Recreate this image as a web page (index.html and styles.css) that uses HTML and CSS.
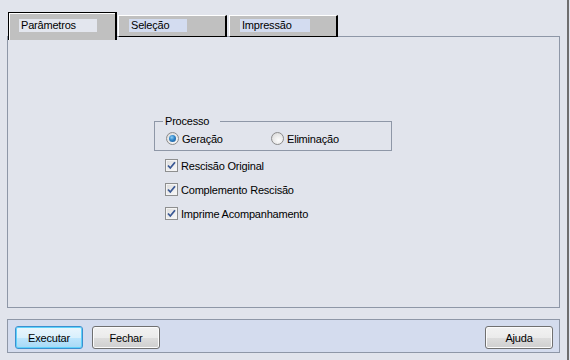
FILE: index.html
```html
<!DOCTYPE html>
<html lang="pt">
<head>
    <meta charset="UTF-8">
    <title>Parâmetros</title>
    <link rel="stylesheet" href="styles.css">
</head>
<body>
    <div class="window">
        <!-- Tabs -->
        <div class="tabs">
            <div class="tab active"><span class="tab-label label-params">Parâmetros</span></div>
            <div class="tab"><span class="tab-label label-selecao">Seleção</span></div>
            <div class="tab tab-last"><span class="tab-label label-impressao">Impressão</span></div>
        </div>

        <!-- Tab page -->
        <div class="panel">
            <fieldset class="group">
                <legend>Processo</legend>
                <div class="radios">
                    <label class="radio radio-first"><span class="radio-dot checked"></span>Geração</label>
                    <label class="radio"><span class="radio-dot"></span>Eliminação</label>
                </div>
            </fieldset>

            <div class="checks">
                <label class="check">
                    <span class="box"><svg width="11" height="11" viewBox="0 0 11 11"><path d="M2 5.5 L4.3 8 L9 2.3" fill="none" stroke="#3a5894" stroke-width="1.8"/></svg></span>
                    Rescisão Original
                </label>
                <label class="check">
                    <span class="box"><svg width="11" height="11" viewBox="0 0 11 11"><path d="M2 5.5 L4.3 8 L9 2.3" fill="none" stroke="#3a5894" stroke-width="1.8"/></svg></span>
                    Complemento Rescisão
                </label>
                <label class="check">
                    <span class="box"><svg width="11" height="11" viewBox="0 0 11 11"><path d="M2 5.5 L4.3 8 L9 2.3" fill="none" stroke="#3a5894" stroke-width="1.8"/></svg></span>
                    Imprime Acompanhamento
                </label>
            </div>
        </div>

        <!-- Button bar -->
        <div class="bar">
            <button class="btn btn-default">Executar</button>
            <button class="btn">Fechar</button>
            <span class="spacer"></span>
            <button class="btn">Ajuda</button>
        </div>
    </div>
</body>
</html>
```

FILE: styles.css
```css
/* Global */
body {
    margin: 0;
    background: #e1e4ec;
    font-family: "Liberation Sans", Arial, sans-serif;
    font-size: 11px;
    letter-spacing: -0.2px;
    color: #000;
}

.window {
    width: 569px;
    height: 360px;
    box-sizing: border-box;
    border-right: 2px solid #6e6e6e;
    padding: 12px 0 0 7px;
    overflow: hidden;
}

/* Tabs */
.tabs {
    display: flex;
    align-items: flex-start;
    height: 28px;
    margin-left: 1px;
    margin-bottom: -4px;
    position: relative;
    z-index: 1;
}

.tab {
    width: 109px;
    height: 22px;
    margin-top: 3px;
    margin-left: 1px;
    box-sizing: border-box;
    background: #c0c0c0;
    border-top: 1px solid #fff;
    border-left: 1px solid #fff;
    border-right: 2px solid #000;
    border-bottom: 1px solid #000;
    padding: 3px 0 0 10px;
}

.tab-last {
    margin-left: 2px;
}

.tab.active {
    height: 28px;
    margin: 0;
    border-top: 1px solid #000;
    border-left: 1px solid #000;
    border-bottom: 0;
    box-shadow: inset 1px 1px 0 #fff;
    padding: 6px 0 0 10px;
}

.tab-label {
    display: block;
    height: 13px;
    line-height: 13px;
    padding-left: 2px;
    background: #d3dcf0;
}

.label-params {
    width: 76px;
    background: #e3e6ee;
}

.label-selecao {
    width: 56px;
}

.label-impressao {
    width: 68px;
}

/* Tab page */
.panel {
    width: 553px;
    height: 272px;
    box-sizing: border-box;
    border: 1px solid #8e97a7;
    padding: 78px 0 0 146px;
}

.group {
    margin: 0;
    width: 238px;
    box-sizing: border-box;
    border: 1px solid #8e97a7;
    padding: 4px 0 5px 8px;
}

.group legend {
    width: 57px;
    box-sizing: border-box;
    padding: 0 2px;
    line-height: 13px;
}

.radios {
    display: flex;
    padding-left: 3px;
}

.radio {
    display: flex;
    align-items: center;
    gap: 3px;
    height: 13px;
}

.radio-first {
    width: 105px;
}

.radio-dot {
    width: 13px;
    height: 13px;
    box-sizing: border-box;
    border-radius: 50%;
    border: 1px solid #8c8c8c;
    background: radial-gradient(circle at 60% 65%, #fdfdfd 0%, #e6e6e6 60%, #cfcfcf 100%);
    display: flex;
    align-items: center;
    justify-content: center;
}

.radio-dot.checked::after {
    content: "";
    width: 7px;
    height: 7px;
    border-radius: 50%;
    background: radial-gradient(circle at 40% 35%, #8fd0f5 0%, #2f84c8 45%, #1b4f8a 100%);
}

.checks {
    display: flex;
    flex-direction: column;
    gap: 11px;
    margin: 8px 0 0 11px;
}

.check {
    display: flex;
    align-items: center;
    gap: 3px;
    height: 13px;
}

.box {
    width: 13px;
    height: 13px;
    box-sizing: border-box;
    border: 1px solid #8e8f8f;
    background: linear-gradient(135deg, #dcdcdc, #fafafa);
    box-shadow: inset 0 0 0 1px #f4f4f4;
    display: flex;
    align-items: center;
    justify-content: center;
}

/* Button bar */
.bar {
    display: flex;
    gap: 9px;
    width: 553px;
    height: 34px;
    box-sizing: border-box;
    margin-top: 11px;
    border: 1px solid #8e97a7;
    background: #d4dcee;
    padding: 6px 6px 0 7px;
}

.spacer {
    flex: 1;
}

.btn {
    width: 68px;
    height: 23px;
    border: 1px solid #707070;
    border-radius: 3px;
    font-family: "Liberation Sans", Arial, sans-serif;
    font-size: 11px;
    letter-spacing: -0.2px;
    color: #000;
    padding: 0;
    background: linear-gradient(#f2f2f2 0%, #ebebeb 50%, #dddddd 51%, #cfcfcf 100%);
    box-shadow: inset 0 0 0 1px #fbfbfb;
}

.btn-default {
    border-color: #3c8fd0;
    background: linear-gradient(#eaf6fd 0%, #d9f0fc 50%, #bee6fd 51%, #a7d9f5 100%);
    box-shadow: inset 0 0 0 1px #5fd2fa;
}
```
